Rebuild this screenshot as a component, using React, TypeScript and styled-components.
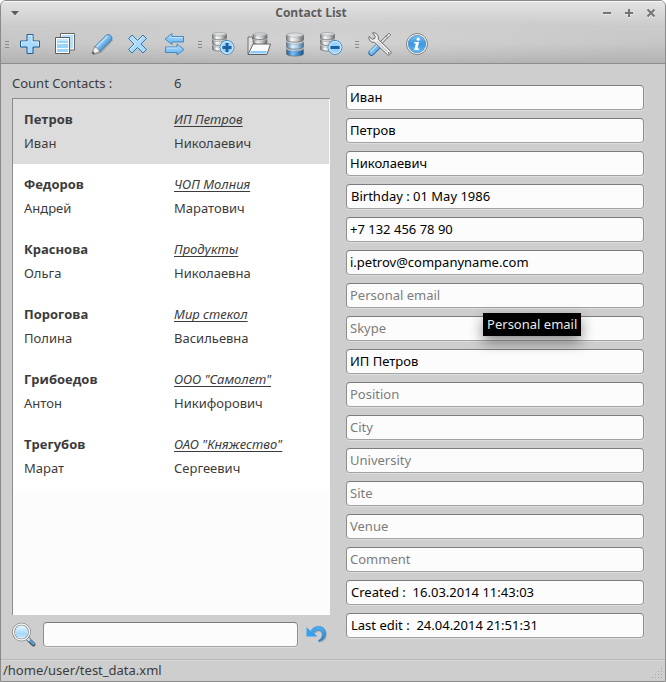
import React, { useState } from 'react';
import styled, { createGlobalStyle, css } from 'styled-components';

const GlobalStyle = createGlobalStyle`
  *, *::before, *::after { box-sizing: border-box; }
  body {
    margin: 0;
    background: #fff;
    color: #3c3c3c;
    font: 13px/18px "Noto Sans", "Open Sans", sans-serif;
  }
  button, input { font: inherit; color: inherit; }
`;

/* ---------- window frame ---------- */

const Window = styled.div`
  display: flex;
  flex-direction: column;
  min-height: 100vh;
  overflow: hidden;
  background: #cecece;
  border: 1px solid #8a8a8a;
  border-radius: 6px 6px 0 0;
`;

const Header = styled.header`
  border-bottom: 1px solid #8c8c8c;
  background:
    radial-gradient(ellipse 50% 26px at 50% 42px, rgba(255, 255, 255, 0.22), rgba(255, 255, 255, 0)),
    linear-gradient(#e4e4e4, #cbcbcb 40%, #c6c6c6 68%, #b2b2b2);
  box-shadow: inset 0 1px #f6f6f6;
`;

const TitleBar = styled.div`
  display: grid;
  grid-template-columns: auto minmax(0, 1fr) auto;
  align-items: center;
  height: 24px;
  padding: 0 7px;
`;

const Title = styled.h1`
  margin: 0;
  font-size: 12px;
  line-height: 18px;
  font-weight: 700;
  font-family: "Open Sans", "Noto Sans", sans-serif;
  text-align: center;
  color: #5c5c5c;
  text-shadow: 0 1px #e2e2e2;
`;

const WindowButtons = styled.div`
  display: flex;
  justify-content: flex-end;
  gap: 8px;
`;

const FrameButton = styled.button`
  display: grid;
  place-items: center;
  width: 14px;
  height: 14px;
  padding: 0;
  border: 0;
  background: none;
`;

/* ---------- toolbar ---------- */

const Toolbar = styled.div`
  display: flex;
  flex-wrap: wrap;
  gap: 6px;
  padding: 0 4px;
`;

const ToolGroup = styled.div`
  display: flex;
  align-items: center;
`;

const Grip = styled.span`
  width: 4px;
  height: 7px;
  margin-right: 3px;
  background: repeating-linear-gradient(#8a8a8a 0 1px, transparent 1px 3px);
`;

const ToolButton = styled.button`
  display: grid;
  place-items: center;
  width: 36px;
  height: 38px;
  padding: 0;
  border: 0;
  background: none;
`;

const Icon = styled.svg.attrs({ viewBox: '0 0 24 24', 'aria-hidden': true })`
  display: block;
  width: 24px;
  height: 24px;
  overflow: visible;
`;

/* ---------- body ---------- */

const Body = styled.main`
  flex: 1;
  display: grid;
  grid-template-columns: minmax(0, 318fr) minmax(0, 298fr);
  gap: 16px;
  padding: 10px 21px 12px 11px;
`;

const Contacts = styled.section`
  display: flex;
  flex-direction: column;
`;

const pair = css`
  display: grid;
  grid-template-columns: 150px minmax(0, 1fr);
`;

const Count = styled.div`
  ${pair}
  column-gap: 12px;
  margin-bottom: 6px;
`;

const List = styled.ul`
  flex: 1;
  margin: 0;
  padding: 0 1px 0 0;
  list-style: none;
  background: #fcfcfc;
  border: solid #8c8c8c;
  border-width: 1px 0 0 1px;
`;

const Contact = styled.li<{ $selected: boolean }>`
  ${pair}
  align-content: start;
  row-gap: 6px;
  height: 65px;
  padding: 11px;
  background: ${(p) => (p.$selected ? '#dcdcdc' : '#fff')};
  cursor: default;
`;

const Surname = styled.strong`
  font-family: "Open Sans", "Noto Sans", sans-serif;
  font-size: 13px;
  font-weight: 700;
`;

const Company = styled.em`
  text-decoration: underline;
  text-decoration-skip-ink: none;
  text-underline-offset: 2px;
`;

const SearchRow = styled.form`
  display: grid;
  grid-template-columns: 24px minmax(0, 1fr) 25px;
  align-items: center;
  gap: 7px;
  margin-top: 7px;
`;

const IconButton = styled.button`
  padding: 0;
  border: 0;
  background: none;
`;

/* ---------- fields ---------- */

const Fields = styled.form`
  display: flex;
  flex-direction: column;
  gap: 8px;
  padding-top: 11px;
`;

const FieldLabel = styled.label`
  position: relative;
  display: block;
`;

const TextInput = styled.input`
  display: block;
  width: 100%;
  height: 25px;
  padding: 0 3px 2px;
  border: 1px solid #8e8e8e;
  border-top-color: #7c7c7c;
  border-bottom-color: #a2a2a2;
  border-radius: 4px;
  outline: 0;
  background: #fcfcfc;
  color: #000;
  box-shadow: 0 1px #dedede, 1px 0 #d8d8d8;

  &:read-only { padding: 0 4px 2px; }
  &::placeholder { color: #7c7c7c; opacity: 1; }
`;

const Tooltip = styled.span`
  position: absolute;
  z-index: 1;
  top: 30px;
  left: 46%;
  padding: 2px 4px 3px;
  background: #000;
  color: #e8e8e8;
  white-space: nowrap;
  box-shadow: 0 6px 14px rgba(0, 0, 0, 0.45);
`;

const StatusBar = styled.footer`
  display: flex;
  justify-content: space-between;
  align-items: flex-end;
  border-top: 1px solid #b8b8b8;
  padding: 1px 2px 2px;
  box-shadow: inset 0 1px #d6d6d6;
`;

const SizeGrip = styled.svg.attrs({ viewBox: '0 0 12 12', 'aria-hidden': true })`
  width: 12px;
  height: 12px;
`;

/* ---------- drawings ---------- */

const ICE = '#a9d9fb';
const EDGE = '#1f5f96';

function Metal({ id }: { id: string }) {
  return (
    <linearGradient id={id}>
      <stop offset="0" stopColor="#777" />
      <stop offset=".3" stopColor="#fafafa" />
      <stop offset=".6" stopColor="#d2d2d2" />
      <stop offset="1" stopColor="#666" />
    </linearGradient>
  );
}

function Cylinder({ x, y, w, seg, fills }: { x: number; y: number; w: number; seg: number; fills: string[] }) {
  const rx = w / 2;
  const ry = seg * 0.3;
  return (
    <g>
      {fills
        .map((f, i) => ({ f, top: y + ry + i * seg }))
        .reverse()
        .map(({ f, top }) => (
          <g key={top}>
            <path
              d={`M${x} ${top}v${seg - ry}a${rx} ${ry} 0 0 0 ${w} 0v${ry - seg}z`}
              fill={f}
              stroke="#6a6e72"
              strokeWidth=".7"
            />
            <ellipse cx={x + rx} cy={top} rx={rx} ry={ry} fill="#fff" fillOpacity=".55" stroke="#8f9397" strokeWidth=".6" />
          </g>
        ))}
    </g>
  );
}

function Badge({ plus }: { plus?: boolean }) {
  return (
    <g>
      <circle cx="16" cy="15.4" r="7" fill="#9dd3fa" stroke="#3f85bd" strokeWidth=".9" />
      <circle cx="16" cy="15.4" r="6" fill="none" stroke="#d8effe" strokeWidth=".9" />
      <path d={plus ? 'M11.5 15.4h9M16 10.9v9' : 'M11.5 15.4h9'} stroke="#1c62a0" strokeWidth="3" />
    </g>
  );
}

const AddIcon = () => (
  <Icon>
    <path d="M9.5 3h6v6.5H22v6h-6.5V22h-6v-6.5H3v-6h6.5z" fill="#555" opacity=".25" />
    <path d="M9 2.5h6V9h6.5v6H15v6.5H9V15H2.5V9H9z" fill={ICE} stroke={EDGE} />
    <path d="M10 3.5h4V10h6.5v4M3.5 14v-4H10" fill="none" stroke="#d8effe" />
  </Icon>
);

const CopyIcon = () => (
  <Icon>
    <path d="M6.5 1.5h14v16.5h-14z" fill="#fff" stroke="#666" />
    <path d="M8 3h11v13.500H8z" fill="#b5dffb" />
    <path d="M1.5 5.500h14v16h-14z" fill="#fff" stroke="#5c5c5c" />
    <path d="M3 7h11v4H3zM3 12h11v4H3zM3 17h11v3H3z" fill="#9bd4fb" />
    <path d="M3 7h11v2H3z" fill="#c8e8fd" />
  </Icon>
);

const PencilIcon = () => (
  <Icon>
    <defs>
      <linearGradient id="pencil" x1="0" y1="0" x2="1" y2="1">
        <stop offset=".2" stopColor="#8cc8f4" />
        <stop offset=".5" stopColor="#77b8ea" />
        <stop offset=".8" stopColor="#2d74b4" />
      </linearGradient>
    </defs>
    <path d="M3 22.5L11 20 22.500 8" fill="none" stroke="#666" strokeOpacity=".35" strokeWidth="1.5" />
    <path d="M4.5 15L16.500 3c2.500-2 7 2 5 5L9.500 20z" fill="url(#pencil)" stroke="#2b6ca5" strokeWidth=".8" />
    <path d="M6.5 15.200L17.500 4.200" stroke="#b8e0fb" strokeWidth="1.7" />
    <path d="M4.5 15c2 0 4.500 2 5 5L3.500 22c-1 .3-1.500-.3-1.300-1.200z" fill="#eee" stroke="#747474" strokeWidth=".7" />
    <path d="M2.9 19L5 21.400l-1.800.6q-1.300 0-1-1.200z" fill="#555" />
  </Icon>
);

const DeleteIcon = () => (
  <Icon>
    <path
      d="M6 3l5.500 5.500L17 3l3.500 3.500L15 12l5.500 5.500L17 21l-5.500-5.500L6 21l-3.500-3.500L8 12 2.500 6.500z"
      fill={ICE}
      stroke="#2f76b0"
      strokeLinejoin="round"
    />
    <path d="M6 4.400l5.500 5.500L17 4.400M4 17.500L9.400 12 4 6.500" fill="none" stroke="#dcf1fe" />
  </Icon>
);

const SwapIcon = () => (
  <Icon>
    <defs>
      <linearGradient id="swap" x2="0" y2="1">
        <stop offset="0" stopColor="#b5e0fd" />
        <stop offset="1" stopColor="#5fb2ee" />
      </linearGradient>
    </defs>
    <path d="M3 7l7-5.500v3h11.500V10H10v2.500z" fill="url(#swap)" stroke="#3c82ba" strokeWidth=".9" />
    <path d="M22 17.500l-7-5.500v3H3.500v5.500H15V23z" fill="url(#swap)" stroke="#3c82ba" strokeWidth=".9" />
    <path d="M9.500 5.500h11M4.500 16h11" stroke="#d2ecfe" strokeWidth=".8" />
  </Icon>
);

const DbAddIcon = () => (
  <Icon>
    <defs><Metal id="metal-add" /></defs>
    <Cylinder x={1.5} y={0.5} w={14} seg={5.6} fills={['url(#metal-add)', 'url(#metal-add)', 'url(#metal-add)']} />
    <Badge plus />
  </Icon>
);

const DbOpenIcon = () => (
  <Icon>
    <defs><Metal id="metal-open" /></defs>
    <path d="M1 22.500V5h4.500v2H18v15.500z" fill="#e2e2e2" stroke="#666" strokeWidth=".9" />
    <Cylinder x={6} y={1} w={14} seg={5} fills={['url(#metal-open)', 'url(#metal-open)', 'url(#metal-open)']} />
    <path d="M6 12h17.500L20 22.500H1.200z" fill="#fafafa" stroke="#555" strokeWidth=".9" strokeLinejoin="round" />
    <path d="M4 19h16l-.8 2.500H2.800z" fill="#8ccbf8" />
  </Icon>
);

const DbSaveIcon = () => (
  <Icon>
    <defs>
      <Metal id="metal-save" />
      <linearGradient id="pale">
        <stop offset="0" stopColor="#46769c" />
        <stop offset=".35" stopColor="#dff1fd" />
        <stop offset=".65" stopColor="#a5cdec" />
        <stop offset="1" stopColor="#3f6d92" />
      </linearGradient>
      <linearGradient id="deep">
        <stop offset="0" stopColor="#1a5792" />
        <stop offset=".35" stopColor="#7fc1f5" />
        <stop offset=".65" stopColor="#4192d8" />
        <stop offset="1" stopColor="#164b82" />
      </linearGradient>
    </defs>
    <Cylinder x={3.5} y={1} w={17} seg={7} fills={['url(#metal-save)', 'url(#pale)', 'url(#deep)']} />
  </Icon>
);

const DbRemoveIcon = () => (
  <Icon>
    <defs><Metal id="metal-remove" /></defs>
    <Cylinder x={1.5} y={0.5} w={14} seg={5.6} fills={['url(#metal-remove)', 'url(#metal-remove)', 'url(#metal-remove)']} />
    <Badge />
  </Icon>
);

const ToolsIcon = () => (
  <Icon>
    <path d="M11.500 12.500L20 3.500" stroke="#666" strokeWidth="3" />
    <path d="M11.500 12.500L20 3.500" stroke="#eee" strokeWidth="1.600" />
    <path d="M18.200 4.600L20.800 1l2 2-3.500 2.700z" fill="#f2f2f2" stroke="#666" strokeWidth=".8" />
    <path d="M3.500 20.800L10 14.300" stroke="#235f97" strokeWidth="6" strokeLinecap="round" />
    <path d="M3.500 20.500L10 14" stroke="#6fb9f0" strokeWidth="4.600" strokeLinecap="round" />
    <path d="M2.800 19.500L9 13.300" stroke="#b7e0fc" strokeWidth="1.300" strokeLinecap="round" />
    <path
      d="M4.500.8l2.700 3.600-.6 2.300-2.400.5L1 4.500C.5 8 2.600 10.700 6.500 10.300L19.300 22.600c1.900 1.300 4.700-1.100 3.300-3.300L10.300 7.200C10.900 3.200 8.300.4 4.500.8z"
      fill="#f0f0f0"
      stroke="#5f5f5f"
      strokeWidth=".9"
    />
    <path d="M9 9.500l10.500 10.300" stroke="#c8c8c8" strokeWidth="1.200" />
    <circle cx="20.800" cy="20.900" r=".9" fill="#777" />
  </Icon>
);

const InfoIcon = () => (
  <Icon>
    <defs>
      <linearGradient id="info" x2="0" y2="1">
        <stop offset="0" stopColor="#7cc0f4" />
        <stop offset=".5" stopColor="#3c96e2" />
        <stop offset="1" stopColor="#66bdfa" />
      </linearGradient>
    </defs>
    <circle cx="13" cy="12" r="10.500" fill="#fafafa" stroke="#747474" strokeWidth=".9" />
    <circle cx="13" cy="12" r="8.700" fill="url(#info)" stroke="#3478b4" strokeWidth=".6" />
    <circle cx="14.200" cy="7.200" r="1.600" fill="#fff" />
    <path d="M10.300 10h4.800l-1.600 6.500h1.700l-.4 1.600h-4.600l1.600-6.500h-1.900z" fill="#fff" />
  </Icon>
);

const SearchIcon = () => (
  <Icon>
    <defs>
      <linearGradient id="lens" x2="0" y2="1">
        <stop offset="0" stopColor="#f3fbff" />
        <stop offset=".5" stopColor="#b6dff8" />
        <stop offset="1" stopColor="#e6f6ff" />
      </linearGradient>
    </defs>
    <path d="M16 16l5.500 5.500" stroke="#555" strokeWidth="4" strokeLinecap="round" />
    <path d="M17 16.500l4.500 4.500" stroke="#4da2e2" strokeWidth="2.400" strokeLinecap="round" />
    <path d="M15 15l2.500 2.500" stroke="#ddd" strokeWidth="2.500" />
    <circle cx="9.500" cy="9" r="8" fill="url(#lens)" stroke="#6e6e6e" strokeWidth="2.600" />
    <circle cx="9.500" cy="9" r="8" fill="none" stroke="#f6f6f6" strokeWidth="1.500" />
    <path d="M4 9.500h11v3q-5 3-11 0z" fill="#8fcdf4" opacity=".45" />
  </Icon>
);

const UndoIcon = () => (
  <Icon>
    <defs>
      <linearGradient id="undo" x2="0" y2="1">
        <stop offset="0" stopColor="#4fb0f6" />
        <stop offset="1" stopColor="#2f7cbd" />
      </linearGradient>
    </defs>
    <path d="M7 7.500C11.500 1.200 20.800 3.500 20.800 10.800c0 4-2.300 6.900-6.600 8.200 3-2.200 3.600-4.700 3.300-7.200-.6-5-5.800-5.600-8.200-1.800z" fill="#666" opacity=".3" transform="translate(1 1)" />
    <path d="M6 7.500C10.500 .8 20.800 2.500 20.800 10.200c0 4-2.300 7.200-6.800 8.600l-.7-1.300c3-1.500 4.100-3.700 3.900-6C16.700 6.600 11.600 6 9.200 9.800z" fill="url(#undo)" stroke="#2f7fc0" strokeWidth=".5" />
    <path d="M1.500 4.200v9.300h11L9 10 4.800 7.200z" fill="#35a0ee" />
  </Icon>
);

/* ---------- data ---------- */

const toolGroups = [
  [
    ['Add contact', AddIcon],
    ['Copy contact', CopyIcon],
    ['Edit contact', PencilIcon],
    ['Delete contact', DeleteIcon],
    ['Exchange', SwapIcon],
  ],
  [
    ['New database', DbAddIcon],
    ['Open database', DbOpenIcon],
    ['Save database', DbSaveIcon],
    ['Remove database', DbRemoveIcon],
  ],
  [
    ['Settings', ToolsIcon],
    ['About', InfoIcon],
  ],
] as [string, React.FC][][];

const contacts = [
  ['Петров', 'ИП Петров', 'Иван', 'Николаевич'],
  ['Федоров', 'ЧОП Молния', 'Андрей', 'Маратович'],
  ['Краснова', 'Продукты', 'Ольга', 'Николаевна'],
  ['Порогова', 'Мир стекол', 'Полина', 'Васильевна'],
  ['Грибоедов', 'ООО "Самолет"', 'Антон', 'Никифорович'],
  ['Трегубов', 'ОАО "Княжество"', 'Марат', 'Сергеевич'],
];

type Field = { name: string; value?: string; fixed?: boolean; tip?: boolean };

const fields: Field[] = [
  { name: 'First name', value: 'Иван' },
  { name: 'Last name', value: 'Петров' },
  { name: 'Middle name', value: 'Николаевич' },
  { name: 'Birthday', value: 'Birthday : 01 May 1986', fixed: true },
  { name: 'Phone', value: '+7 132 456 78 90' },
  { name: 'Work email', value: 'i.petrov@companyname.com' },
  { name: 'Personal email', tip: true },
  { name: 'Skype' },
  { name: 'Company', value: 'ИП Петров' },
  { name: 'Position' },
  { name: 'City' },
  { name: 'University' },
  { name: 'Site' },
  { name: 'Venue' },
  { name: 'Comment' },
  { name: 'Created', value: 'Created :  16.03.2014 11:43:03', fixed: true },
  { name: 'Last edit', value: 'Last edit :  24.04.2014 21:51:31', fixed: true },
];

const gripDots = [[10, 1], [10, 4], [7, 4], [10, 7], [7, 7], [4, 7], [10, 10], [7, 10], [4, 10], [1, 10]];

export default function App() {
  const [selected, setSelected] = useState(0);
  return (
    <Window>
      <GlobalStyle />
      <Header>
        <TitleBar>
          <FrameButton aria-label="Window menu">
            <svg width="10" height="8" viewBox="0 0 10 8">
              <path d="M1 3h8L5 7.500z" fill="#eee" />
              <path d="M1 2h8L5 6.500z" fill="#5c5c5c" />
            </svg>
          </FrameButton>
          <Title>Contact List</Title>
          <WindowButtons>
            {[
              ['Minimize', 'M1 5h8'],
              ['Maximize', 'M1 5h8M5 1v8'],
              ['Close', 'M1.500 1.500l7 7M8.500 1.500l-7 7'],
            ].map(([label, d]) => (
              <FrameButton key={label} aria-label={label}>
                <svg width="10" height="11" viewBox="0 0 10 11">
                  <path d={d} transform="translate(0 1)" stroke="#ececec" strokeWidth="2" />
                  <path d={d} stroke="#747474" strokeWidth="2" />
                </svg>
              </FrameButton>
            ))}
          </WindowButtons>
        </TitleBar>
        <Toolbar role="toolbar" aria-label="Main toolbar">
          {toolGroups.map((group, i) => (
            <ToolGroup key={i}>
              <Grip />
              {group.map(([label, Glyph]) => (
                <ToolButton key={label} type="button" aria-label={label}>
                  <Glyph />
                </ToolButton>
              ))}
            </ToolGroup>
          ))}
        </Toolbar>
      </Header>
      <Body>
        <Contacts>
          <Count>
            <span>Count Contacts :</span>
            <span>{contacts.length}</span>
          </Count>
          <List role="listbox" aria-label="Contacts">
            {contacts.map(([surname, company, first, middle], i) => (
              <Contact
                key={surname}
                role="option"
                aria-selected={i === selected}
                $selected={i === selected}
                onClick={() => setSelected(i)}
              >
                <Surname>{surname}</Surname>
                <Company>{company}</Company>
                <span>{first}</span>
                <span>{middle}</span>
              </Contact>
            ))}
          </List>
          <SearchRow onSubmit={(e) => e.preventDefault()}>
            <SearchIcon />
            <TextInput type="text" aria-label="Search" />
            <IconButton type="reset" aria-label="Reset search">
              <UndoIcon />
            </IconButton>
          </SearchRow>
        </Contacts>
        <Fields onSubmit={(e) => e.preventDefault()}>
          {fields.map((f) => (
            <FieldLabel key={f.name}>
              <TextInput
                type="text"
                aria-label={f.name}
                placeholder={f.name}
                defaultValue={f.value}
                readOnly={f.fixed}
              />
              {f.tip && <Tooltip role="tooltip">{f.name}</Tooltip>}
            </FieldLabel>
          ))}
        </Fields>
      </Body>
      <StatusBar>
        <span>/home/user/test_data.xml</span>
        <SizeGrip>
          {gripDots.map(([x, y]) => (
            <rect key={`${x}-${y}`} x={x} y={y} width="1" height="1" fill="#a8a8a8" />
          ))}
        </SizeGrip>
      </StatusBar>
    </Window>
  );
}
